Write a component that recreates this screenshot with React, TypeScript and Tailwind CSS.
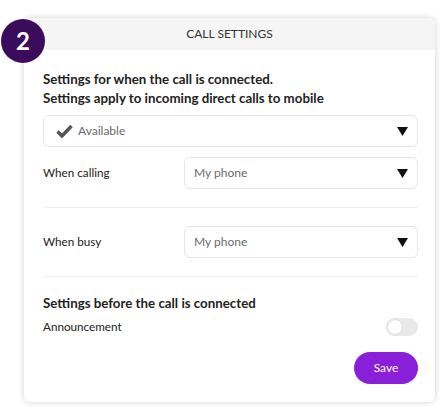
import React, { useState } from "react";

const Caret = () => (
  <svg width="11" height="9" viewBox="0 0 11 9" className="shrink-0">
    <polygon points="0,0 11,0 5.5,9" fill="#111" />
  </svg>
);

const Select = ({ value, icon }: { value: string; icon?: boolean }) => (
  <div className="flex h-8 flex-1 items-center rounded-md border border-[#e6e6e6] bg-white pl-[9px] pr-[9px]">
    {icon && (
      <svg width="17" height="14" viewBox="0 0 17 14" className="mr-[5px] ml-[3px]">
        <path d="M1.5 7.5 L6 12 L15.5 2" fill="none" stroke="#555" strokeWidth="3.4" strokeLinejoin="miter" />
      </svg>
    )}
    <span className="flex-1 text-[12px] text-[#6b6b6b]">{value}</span>
    <Caret />
  </div>
);

const App: React.FC = () => {
  const [announce, setAnnounce] = useState(false);

  return (
    <div className="relative h-[408px] w-[448px] bg-white font-['Lato',sans-serif] text-[#222]">
      {/* STEP BADGE */}
      <div className="absolute left-[1px] top-[1px] z-10 flex h-[44px] w-[44px] items-center justify-center rounded-full bg-[#3b0b5c] text-[24px] font-bold text-white">
        2
      </div>

      {/* CARD */}
      <div className="ml-6 mt-[18px] w-[411px] overflow-hidden rounded-md bg-white shadow-[0_0_6px_rgba(0,0,0,0.18)]">
        <div className="flex h-8 items-center justify-center bg-[#f5f5f5] text-[12px] text-[#333]">
          CALL SETTINGS
        </div>

        <div className="pl-[19px] pr-[17px] pt-[20px] pb-[18px]">
          <p className="text-[13.3px] font-bold leading-[19px] text-[#222]">
            Settings for when the call is connected.
          </p>
          <p className="text-[13.3px] font-bold leading-[19px] text-[#222]">
            Settings apply to incoming direct calls to mobile
          </p>

          <div className="mt-[7px] flex">
            <Select value="Available" icon />
          </div>

          <div className="mt-[10px] flex items-center">
            <span className="w-[141px] text-[11.7px]">When calling</span>
            <Select value="My phone" />
          </div>

          <div className="my-[18px] h-px bg-[#efefef]" />

          <div className="flex items-center">
            <span className="w-[141px] text-[11.7px]">When busy</span>
            <Select value="My phone" />
          </div>

          <div className="mt-[18px] mb-[17px] h-px bg-[#efefef]" />

          <p className="text-[13.3px] font-bold leading-[19px] text-[#222]">
            Settings before the call is connected
          </p>

          <div className="mt-[5px] flex items-center justify-between">
            <span className="text-[11.7px]">Announcement</span>
            <button
              type="button"
              onClick={() => setAnnounce(!announce)}
              className="relative h-[18px] w-[32px] rounded-full bg-[#e9e9e9]"
            >
              <span className="absolute left-[2px] top-[2px] h-[14px] w-[14px] rounded-full bg-white shadow-[0_0_2px_rgba(0,0,0,0.15)]" />
            </button>
          </div>

          <div className="mt-[16px] flex justify-end">
            <button
              type="button"
              className="h-8 w-16 rounded-full bg-[#8a1fd9] text-[12px] text-white"
            >
              Save
            </button>
          </div>
        </div>
      </div>
    </div>
  );
};

export default App;
